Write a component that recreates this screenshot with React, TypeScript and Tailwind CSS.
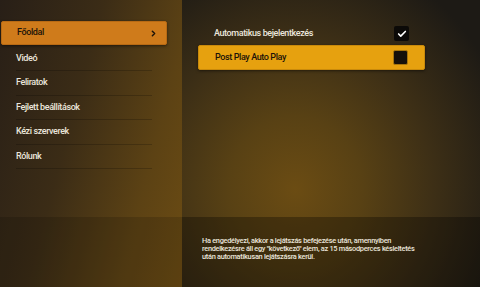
import { Check, ChevronRight } from "lucide-react";

const menu = ["Videó", "Feliratok", "Fejlett beállítások", "Kézi szerverek", "Rólunk"];

export default function App() {
  return (
    <div
      className="w-[480px] h-[287px] flex overflow-hidden text-[#ebe6dc] bg-[#1c1915] font-medium"
      style={{ fontFamily: "Roboto, 'Noto Sans', sans-serif" }}
    >
      {/* left column */}
      <div className="w-[182px] flex flex-col bg-[linear-gradient(105deg,#281f17_0%,#3b2c16_40%,#5c4214_75%,#6c4c13_100%)]">
        <div className="h-[217px] pt-[21px]">
          <div className="ml-[1px] w-[166px] h-[24px] flex items-center justify-between pl-[15px] pr-[8px] rounded-[2px] bg-[#cf7b1b] border border-[#b86a14] shadow-[0_1px_3px_rgba(0,0,0,0.5)] text-[#1c1309] text-[9px] tracking-[-0.4px]">
            <span>Főoldal</span>
            <ChevronRight className="w-[9px] h-[9px]" strokeWidth={4} />
          </div>
          <div className="ml-[16px] w-[136px] pt-[2px]">
            {menu.map((item) => (
              <div
                key={item}
                className="h-[24.4px] flex items-center border-b border-black/20 text-[9px] tracking-[-0.4px]"
              >
                {item}
              </div>
            ))}
          </div>
        </div>
        <div className="flex-1 bg-black/15" />
      </div>

      {/* right column */}
      <div className="flex-1 flex flex-col bg-[radial-gradient(ellipse_75%_85%_at_38%_66%,#6b4c13_0%,#584114_30%,#3d2f16_62%,#1d1a15_100%)]">
        <div className="h-[217px] pt-[22px] pl-[16px]">
          <div className="w-[227px] h-[23px] flex items-center justify-between pl-[16px] pr-[16px] text-[9px] tracking-[-0.4px]">
            <span>Automatikus bejelentkezés</span>
            <div className="w-[15px] h-[15px] rounded-[2px] bg-[#0c0a08] flex items-center justify-center">
              <Check className="w-[10px] h-[10px] text-white" strokeWidth={4} />
            </div>
          </div>
          <div className="w-[227px] h-[25px] flex items-center justify-between pl-[16px] pr-[16px] rounded-[2px] bg-[#e6a10f] border border-[#c98a0b] shadow-[0_1px_3px_rgba(0,0,0,0.5)] text-[#1c1309] text-[9px] tracking-[-0.4px]">
            <span>Post Play Auto Play</span>
            <div className="w-[15px] h-[15px] rounded-[2px] bg-[#15100a] border border-[#a8760c]" />
          </div>
        </div>
        <div className="flex-1 bg-black/30 pt-[20px] pl-[20px] pr-[52px]">
          <p className="text-[7.4px] leading-[8.2px] tracking-[-0.3px]">
            Ha engedélyezi, akkor a lejátszás befejezése után, amennyiben rendelkezésre áll egy "következő" elem, az 15 másodperces késleltetés után automatikusan lejátszásra kerül.
          </p>
        </div>
      </div>
    </div>
  );
}
